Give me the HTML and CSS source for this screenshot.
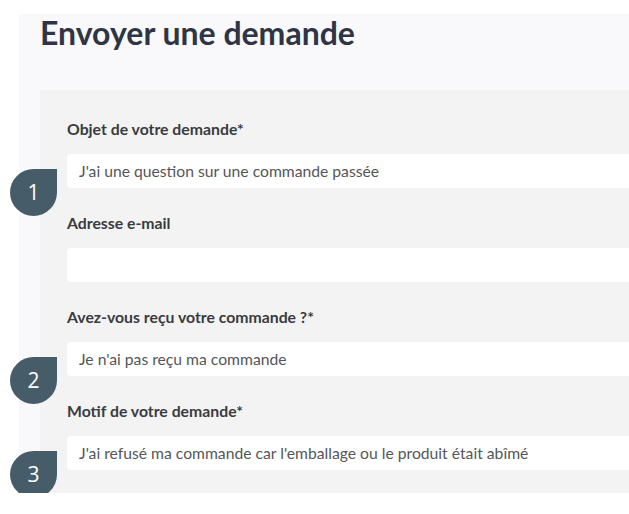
FILE: index.html
```html
<!DOCTYPE html>
<html lang="fr">
<head>
  <meta charset="UTF-8" />
  <title>Envoyer une demande</title>
  <link rel="stylesheet" href="styles.css">
</head>
<body>

  <div class="page">
    <h1>Envoyer une demande</h1>

    <form class="panel">
      <div class="field">
        <label>Objet de votre demande*</label>
        <div class="control">
          <span class="step">1</span>
          <div class="input">J'ai une question sur une commande passée</div>
        </div>
      </div>

      <div class="field">
        <label>Adresse e-mail</label>
        <div class="control">
          <div class="input"></div>
        </div>
      </div>

      <div class="field">
        <label>Avez-vous reçu votre commande ?*</label>
        <div class="control">
          <span class="step">2</span>
          <div class="input">Je n'ai pas reçu ma commande</div>
        </div>
      </div>

      <div class="field">
        <label>Motif de votre demande*</label>
        <div class="control">
          <span class="step">3</span>
          <div class="input">J'ai refusé ma commande car l'emballage ou le produit était abîmé</div>
        </div>
      </div>
    </form>
  </div>

</body>
</html>
```

FILE: styles.css
```css
* {
  box-sizing: border-box;
}

body {
  margin: 0;
  background: #ffffff;
  font-family: 'Lato', sans-serif;
}

.page {
  margin: 14px 0 0 19px;
  padding-left: 21px;
  background: #f9f9fb;
}

.page h1 {
  margin: 0 0 38px;
  font-size: 32px;
  font-weight: 700;
  line-height: 1.2;
  color: #2f3544;
}

.panel {
  background: #f3f3f3;
  padding: 29px 0 23px 27px;
}

.field + .field {
  margin-top: 25px;
}

.field label {
  display: block;
  margin-bottom: 15px;
  font-size: 15.8px;
  font-weight: 700;
  line-height: 20px;
  color: #3a3b3f;
}

.control {
  position: relative;
}

.input {
  height: 34px;
  padding: 0 12px;
  background: #ffffff;
  border-radius: 4px 0 0 4px;
  font-size: 15.7px;
  line-height: 34px;
  color: #555659;
}

.step {
  position: absolute;
  left: -57px;
  top: 15px;
  width: 47px;
  height: 47px;
  border-radius: 50% 0 50% 50%;
  background: #475c69;
  color: #ffffff;
  font-family: 'Open Sans', sans-serif;
  font-size: 21px;
  line-height: 47px;
  text-align: center;
}
```
